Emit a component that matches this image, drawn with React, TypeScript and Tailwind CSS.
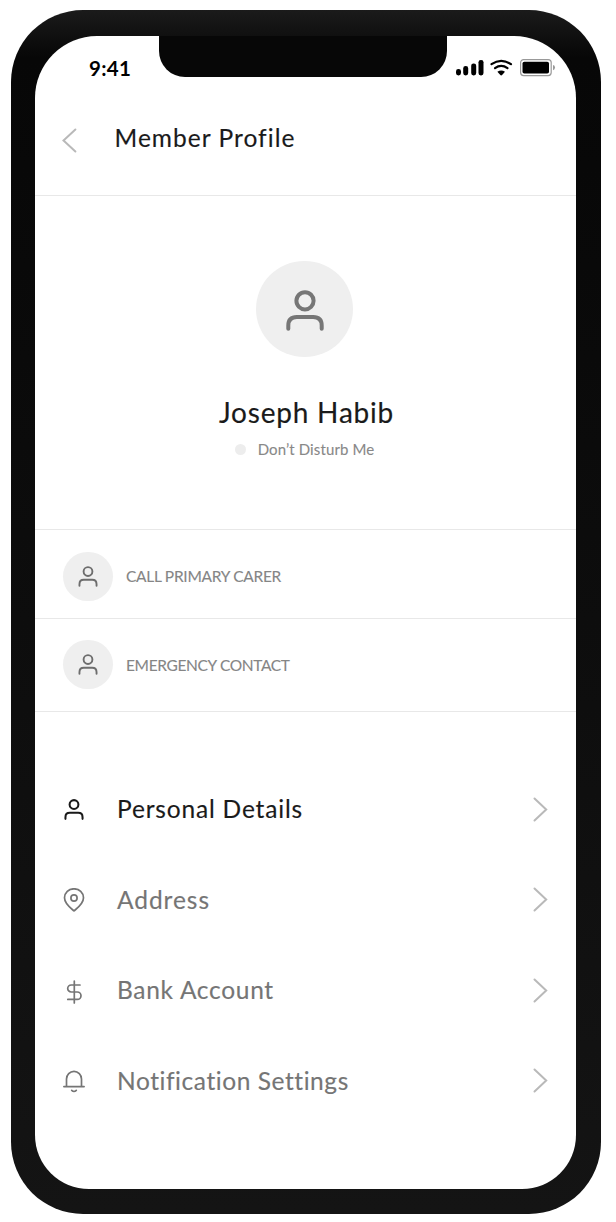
import type { ReactNode } from "react";

function PersonIcon({ className, stroke }: { className: string; stroke: number }) {
  return (
    <svg viewBox="0 0 38 42" fill="none" stroke="currentColor" strokeWidth={stroke} strokeLinecap="round" className={className}>
      <circle cx="19" cy="10.8" r="8.6" />
      <path d="M2.3 38.8V35.5Q2.3 27 10.8 27H27.2Q35.7 27 35.7 35.5V38.8" />
    </svg>
  );
}

function PinIcon() {
  return (
    <svg viewBox="0 0 22 24" fill="none" stroke="currentColor" strokeWidth="1.7" strokeLinejoin="round" className="-ml-px h-6 w-[22px]">
      <path d="M11 22.9C8 20.3 1.5 16 1.5 9.8A9.5 9 0 0 1 20.5 9.8C20.5 16 14 20.3 11 22.9Z" />
      <circle cx="11" cy="10" r="3.1" />
    </svg>
  );
}

function DollarIcon() {
  return (
    <svg viewBox="0 0 22 24" fill="none" stroke="currentColor" strokeWidth="1.7" strokeLinecap="round" className="mt-[3px] h-6 w-[22px]">
      <path d="M11.3 1V23M17 5H8.2A3.5 3.5 0 0 0 8.2 12H14.3A3.7 3.7 0 0 1 14.3 19.4H4.8" />
    </svg>
  );
}

function BellIcon() {
  return (
    <svg viewBox="0 0 22 24" fill="none" stroke="currentColor" strokeWidth="1.7" strokeLinecap="round" className="mt-px h-6 w-[22px]">
      <path d="M.9 17.6H21.1M3.5 17.4V10A7.5 7.7 0 0 1 18.5 10V17.4M8.7 21.3Q11 23.6 13.3 21.3" />
    </svg>
  );
}

function Chevron({ left = false }: { left?: boolean }) {
  return (
    <svg viewBox="0 0 15 25" fill="none" stroke="#b9b9b9" strokeWidth="2" strokeLinecap="round" className="h-[25px] w-[15px]">
      {left ? <path d="M13.4 1.5L1.5 12.5L13.4 23.5" /> : <path d="M1.5 1.5L13.2 12.5L1.5 23.5" />}
    </svg>
  );
}

function StatusIcons() {
  return (
    <svg viewBox="0 0 100 18" className="mt-[23px] ml-[9px] h-[18px] w-[100px]">
      <rect x="0" y="10" width="5" height="6.4" rx="2.4" />
      <rect x="7.2" y="7" width="5" height="9.4" rx="2.4" />
      <rect x="15.2" y="4.5" width="5" height="11.9" rx="2.3" />
      <rect x="22.5" y="1" width="5" height="15.4" rx="2.3" />
      <g fill="none" stroke="#000" strokeWidth="2.2" strokeLinecap="round">
        <path d="M35.5 5.2Q45.2 -1.6 55 5.2" />
        <path d="M39 9.2Q45.2 4.7 51.5 9.2" />
      </g>
      <path d="M41.4 12.7Q45.2 10.1 49 12.7L46.3 15.8Q45.2 17 44.1 15.8Z" />
      <rect x="64.6" y=".6" width="30.6" height="16" rx="3" fill="none" stroke="#999" strokeWidth="1.2" />
      <rect x="66.5" y="2.8" width="26.5" height="11.7" rx="1.8" />
      <path d="M97 6Q99 6.4 99 8.6T97 11.3Z" fill="#999" />
    </svg>
  );
}

function ContactRow({ label, className, labelClass }: { label: string; className: string; labelClass: string }) {
  return (
    <button className={`flex shrink-0 items-start border-b border-[#e8e8e8] pl-7 text-left ${className}`}>
      <span className="flex h-[49px] w-[50px] items-center justify-center rounded-full bg-[#efefef] text-[#6d6d6d]">
        <PersonIcon className="h-[21.5px] w-[20px]" stroke={3.7} />
      </span>
      <span className={`ml-[13px] text-[15.5px] leading-5 whitespace-nowrap text-[#858585] [-webkit-text-stroke:0.1px] ${labelClass}`}>{label}</span>
    </button>
  );
}

function MenuRow({ icon, label, className }: { icon: ReactNode; label: string; className: string }) {
  return (
    <button className={`flex h-[90.5px] items-center pr-7 pl-7 text-left ${className}`}>
      <span className="flex w-[22px] justify-center">{icon}</span>
      <span className="ml-8 flex-1 text-[24.5px] leading-8 whitespace-nowrap [-webkit-text-stroke:0.15px]">{label}</span>
      <Chevron />
    </button>
  );
}

export default function App() {
  return (
    <main className="h-[1222px] w-[616px] bg-white pt-[10px] pl-[11px] font-['Lato',sans-serif]">
      <div className="h-[1204px] w-[590px] rounded-[72px] bg-linear-to-b from-[#1b1b1b] via-[#070707] via-4% to-[#141414] pt-[26px] pr-[25px] pb-[25px] pl-6">
        <div className="flex h-full w-full flex-col overflow-hidden rounded-t-[62px] rounded-b-[54px] bg-white">
          <div className="grid h-[41px] shrink-0 grid-cols-[124px_288px_129px] grid-rows-[41px]">
            <span className="pt-[22px] pl-[54px] text-[20.5px] leading-5 font-bold tracking-[0.3px] text-black">9:41</span>
            <div className="rounded-b-[26px] bg-[#070707]" />
            <StatusIcons />
          </div>
          <header className="flex h-[119px] shrink-0 items-center border-b border-[#e8e8e8] pl-[27px]">
            <button aria-label="Back" className="mt-[9px]"><Chevron left /></button>
            <h1 className="mt-[3px] ml-[37.5px] text-[24.5px] leading-8 tracking-[1.03px] whitespace-nowrap text-[#1a1a1a] [-webkit-text-stroke:0.15px]">Member Profile</h1>
          </header>
          <section className="flex h-[334px] shrink-0 flex-col items-center border-b border-[#e8e8e8] pt-[65px]">
            <div className="mr-[3px] flex h-[96px] w-[97px] items-center justify-center rounded-full bg-[#efefef] text-[#767676]">
              <PersonIcon className="mt-[3px] ml-[2px] h-[42px] w-[38px]" stroke={4} />
            </div>
            <h2 className="mt-[37px] ml-[2px] text-[28px] leading-9 tracking-[0.8px] whitespace-nowrap text-[#1a1a1a] [-webkit-text-stroke:0.15px]">Joseph Habib</h2>
            <div className="mt-[9px] mr-[2px] flex items-center">
              <span className="mr-3 size-[11px] rounded-full bg-[#ededed]" />
              <span className="text-[15px] leading-5 tracking-[0.12px] whitespace-nowrap text-[#888] [-webkit-text-stroke:0.1px]">Don’t Disturb Me</span>
            </div>
          </section>
          <ContactRow label="CALL PRIMARY CARER" className="h-[89px] pt-[22px]" labelClass="mt-3.5 tracking-[-0.28px]" />
          <ContactRow label="EMERGENCY CONTACT" className="h-[93px] pt-[21px]" labelClass="mt-[15px] tracking-[-0.35px]" />
          <nav className="flex flex-col pt-[52px]">
            <MenuRow label="Personal Details" className="tracking-[0.82px] text-[#1a1a1a]" icon={<PersonIcon className="mt-px h-[21.5px] w-[20px]" stroke={4} />} />
            <MenuRow label="Address" className="tracking-[0.95px] text-[#757575]" icon={<PinIcon />} />
            <MenuRow label="Bank Account" className="tracking-[0.7px] text-[#757575]" icon={<DollarIcon />} />
            <MenuRow label="Notification Settings" className="tracking-[0.57px] text-[#757575]" icon={<BellIcon />} />
          </nav>
        </div>
      </div>
    </main>
  );
}
